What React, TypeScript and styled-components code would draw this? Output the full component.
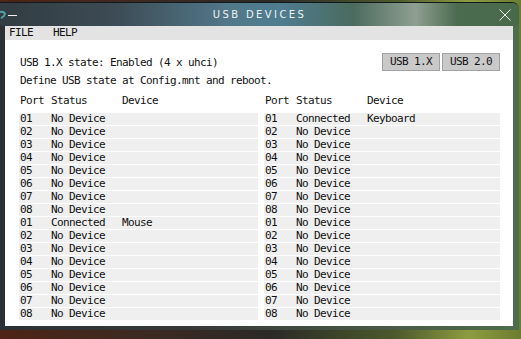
import React from 'react';
import styled, { createGlobalStyle } from 'styled-components';

const GlobalStyle = createGlobalStyle`
  html, body {
    margin: 0;
    padding: 0;
    overflow: hidden;
  }
  body {
    background: #1e1b1a;
    font-family: "DejaVu Sans Mono", "Liberation Mono", monospace;
  }
`;

const Desktop = styled.div`
  width: 521px;
  height: 339px;
  box-sizing: border-box;
  padding-top: 2px;
  background: linear-gradient(90deg, #4e2416 0%, #3c2a22 28%, #2b2a27 52%, #4c5a2c 76%, #8e9c40 90%, #6c7c30 100%);
`;

const Window = styled.div`
  width: 519px;
  height: 328px;
  box-sizing: border-box;
  border-top: 1px solid #141a1c;
  border-top-right-radius: 7px;
  overflow: hidden;
  display: flex;
  flex-direction: column;
  background: linear-gradient(90deg, #2b3034 0%, #393b39 40%, #4a5a47 75%, #4c6e4b 100%);
`;

const TitleBar = styled.div`
  height: 23px;
  flex-shrink: 0;
  display: grid;
  grid-template-columns: 29px 1fr 29px;
  align-items: center;
  background: linear-gradient(90deg, #323c42 0%, #3c4b54 22%, #52788a 44%, #4f7c90 54%, #4a6b5e 68%, #8f9f91 80%, #4c6c50 88%, #486a4a 100%);
`;

const Title = styled.div`
  text-align: center;
  color: #eef2f2;
  font-family: "DejaVu Sans", sans-serif;
  font-size: 10px;
  letter-spacing: 2.4px;
  line-height: 23px;
`;

const Gadget = styled.div`
  display: flex;
  align-items: center;
  height: 23px;
`;

const CloseBox = styled.div`
  display: flex;
  align-items: center;
  padding-left: 9px;
  height: 23px;
`;

const Panel = styled.div`
  flex: 1;
  margin: 0 6px 4px 5px;
  background: #fff;
  display: flex;
  flex-direction: column;
  color: #111;
  font-size: 11px;
  letter-spacing: -0.62px;
`;

const MenuBar = styled.div`
  height: 14px;
  line-height: 14px;
  background: #e3e3e3;
  display: flex;
  gap: 20px;
  padding-left: 4px;
`;

const MenuItem = styled.span`
  cursor: default;
`;

const Body = styled.div`
  padding: 13px 13px 0 14px;
`;

const TopRow = styled.div`
  height: 18px;
  display: flex;
  align-items: center;
  justify-content: space-between;
  padding-left: 1px;
`;

const ButtonGroup = styled.div`
  display: flex;
  gap: 2px;
`;

const ModeButton = styled.button`
  height: 18px;
  padding: 0 7px;
  margin: 0;
  background: #c9c9c9;
  border: 1px solid #a2a2a2;
  border-radius: 0;
  font-family: inherit;
  font-size: 11px;
  letter-spacing: -0.62px;
  color: #111;
  line-height: 16px;
`;

const InfoLine = styled.div`
  margin-top: 4px;
  padding-left: 1px;
  line-height: 12px;
`;

const Tables = styled.div`
  margin-top: 8px;
  display: grid;
  grid-template-columns: 239px 236px;
  gap: 6px;
`;

const PortTable = styled.div`
  display: flex;
  flex-direction: column;
`;

const HeaderRow = styled.div`
  display: grid;
  grid-template-columns: 31px 71px 1fr;
  line-height: 12px;
  padding-left: 1px;
  margin-bottom: 6px;
`;

const PortRow = styled.div`
  display: grid;
  grid-template-columns: 31px 71px 1fr;
  height: 12px;
  line-height: 12px;
  padding-left: 1px;
  margin-bottom: 1px;
  background: #efefef;
`;

type Port = { port: string; status: string; device?: string };

const bus = (connected?: { index: number; device: string }): Port[] =>
  Array.from({ length: 8 }, (_, i) => {
    const port = `0${i + 1}`;
    if (connected && connected.index === i) {
      return { port, status: 'Connected', device: connected.device };
    }
    return { port, status: 'No Device' };
  });

const leftPorts = [...bus(), ...bus({ index: 0, device: 'Mouse' })];
const rightPorts = [...bus({ index: 0, device: 'Keyboard' }), ...bus()];

function PortList({ ports }: { ports: Port[] }) {
  return (
    <PortTable>
      <HeaderRow>
        <span>Port</span>
        <span>Status</span>
        <span>Device</span>
      </HeaderRow>
      {ports.map((p, i) => (
        <PortRow key={i}>
          <span>{p.port}</span>
          <span>{p.status}</span>
          <span>{p.device || ''}</span>
        </PortRow>
      ))}
    </PortTable>
  );
}

export default function App() {
  return (
    <Desktop>
      <GlobalStyle />
      <Window>
        <TitleBar>
          <Gadget>
            <svg width="18" height="10" viewBox="0 0 18 10">
              <path d="M0 2 Q4 1 5 4 Q4 7 1 8" fill="none" stroke="#4fa0a8" strokeWidth="2" />
              <line x1="8" y1="5.5" x2="17" y2="5.5" stroke="#f0f0f0" strokeWidth="1" />
            </svg>
          </Gadget>
          <Title>USB DEVICES</Title>
          <CloseBox>
            <svg width="12" height="12" viewBox="0 0 12 12">
              <path d="M0.5 0.5 L11.5 11.5 M11.5 0.5 L0.5 11.5" stroke="#f2f2f2" strokeWidth="1" />
            </svg>
          </CloseBox>
        </TitleBar>
        <Panel>
          <MenuBar>
            <MenuItem>FILE</MenuItem>
            <MenuItem>HELP</MenuItem>
          </MenuBar>
          <Body>
            <TopRow>
              <span>USB 1.X state: Enabled (4 x uhci)</span>
              <ButtonGroup>
                <ModeButton>USB 1.X</ModeButton>
                <ModeButton>USB 2.0</ModeButton>
              </ButtonGroup>
            </TopRow>
            <InfoLine>Define USB state at Config.mnt and reboot.</InfoLine>
            <Tables>
              <PortList ports={leftPorts} />
              <PortList ports={rightPorts} />
            </Tables>
          </Body>
        </Panel>
      </Window>
    </Desktop>
  );
}
